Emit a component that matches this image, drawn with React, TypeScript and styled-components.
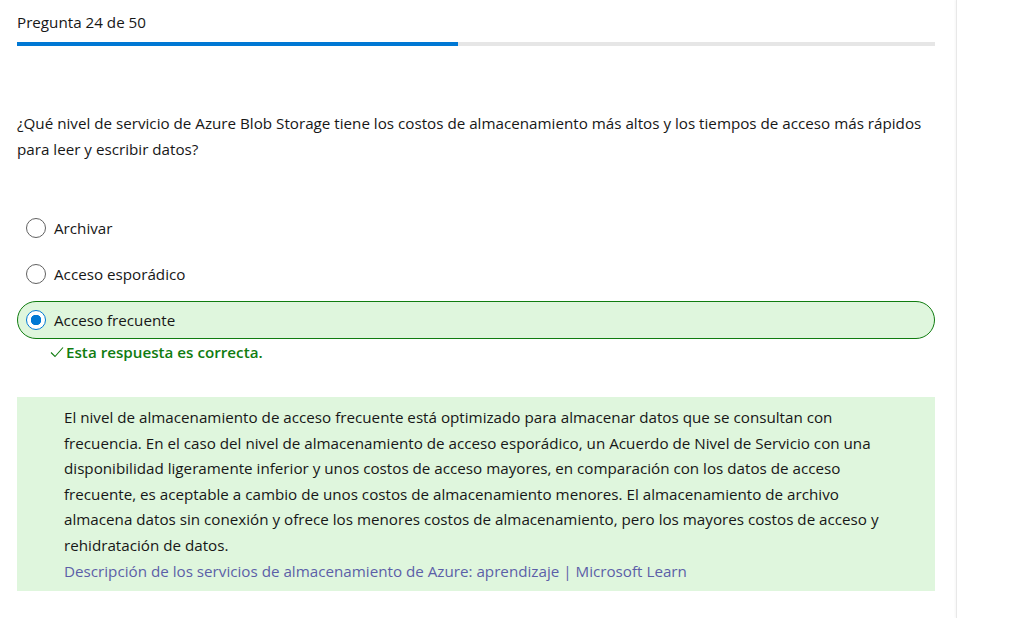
import styled, { createGlobalStyle } from 'styled-components'

const GlobalStyle = createGlobalStyle`
  html, body {
    margin: 0;
    padding: 0;
    background: #ffffff;
  }
  body {
    font-family: "Open Sans", "Noto Sans", Arial, sans-serif;
    color: #171717;
  }
`

const options = [
  { id: 'a', label: 'Archivar', selected: false },
  { id: 'b', label: 'Acceso esporádico', selected: false },
  { id: 'c', label: 'Acceso frecuente', selected: true },
]

const App = () => {
  return (
    <>
      <GlobalStyle />
      <Page>
        <Main>
          <Counter>Pregunta 24 de 50</Counter>
          <Progress>
            <ProgressFill style={{ width: `${(24 / 50) * 100}%` }} />
          </Progress>
          <Question>
            ¿Qué nivel de servicio de Azure Blob Storage tiene los costos de almacenamiento más altos y los tiempos de acceso más rápidos para leer y escribir datos?
          </Question>
          <Options>
            {options.map(o => (
              <Option key={o.id} $selected={o.selected}>
                <Radio $selected={o.selected} />
                <span>{o.label}</span>
              </Option>
            ))}
          </Options>
          <Feedback>
            <svg width="14" height="12" viewBox="0 0 14 12">
              <path d="M1 6.5 L5 10.5 L13 1.5" fill="none" stroke="#107c10" strokeWidth="1.1" />
            </svg>
            Esta respuesta es correcta.
          </Feedback>
          <Explanation>
            <p>
              El nivel de almacenamiento de acceso frecuente está optimizado para almacenar datos que se consultan con frecuencia. En el caso del nivel de almacenamiento de acceso esporádico, un Acuerdo de Nivel de Servicio con una disponibilidad ligeramente inferior y unos costos de acceso mayores, en comparación con los datos de acceso frecuente, es aceptable a cambio de unos costos de almacenamiento menores. El almacenamiento de archivo almacena datos sin conexión y ofrece los menores costos de almacenamiento, pero los mayores costos de acceso y rehidratación de datos.
            </p>
            <RefLink href="#">Descripción de los servicios de almacenamiento de Azure: aprendizaje | Microsoft Learn</RefLink>
          </Explanation>
        </Main>
        <Side />
      </Page>
    </>
  )
}

const Page = styled.div`
  display: flex;
  width: 1036px;
  height: 618px;
  overflow: hidden;
`

const Main = styled.div`
  width: 918px;
  padding: 0 21px 0 17px;
  flex-shrink: 0;
`

const Side = styled.div`
  flex: 1;
  border-left: 1px solid #e8e8e8;
  box-shadow: -1px 0 2px rgba(0, 0, 0, 0.04);
`

const Counter = styled.div`
  font-size: 15.2px;
  line-height: 20px;
  padding-top: 12px;
`

const Progress = styled.div`
  margin-top: 10px;
  height: 4px;
  background: #e6e6e6;
`

const ProgressFill = styled.div`
  height: 100%;
  background: #0078d4;
`

const Question = styled.p`
  margin: 64px 0 0;
  font-size: 15.2px;
  line-height: 26px;
`

const Options = styled.div`
  display: flex;
  flex-direction: column;
  gap: 8px;
  margin-top: 47px;
`

const Option = styled.div<{ $selected: boolean }>`
  display: flex;
  align-items: center;
  gap: 8px;
  height: 38px;
  box-sizing: border-box;
  padding-left: 8px;
  border-radius: 19px;
  font-size: 15.2px;
  border: 1px solid ${p => (p.$selected ? '#107c10' : 'transparent')};
  background: ${p => (p.$selected ? '#dff6dd' : 'transparent')};
`

const Radio = styled.span<{ $selected: boolean }>`
  width: 20px;
  height: 20px;
  box-sizing: border-box;
  border-radius: 50%;
  border: 1px solid ${p => (p.$selected ? '#0078d4' : '#616161')};
  background: ${p => (p.$selected ? 'radial-gradient(circle, #0078d4 0 5px, #ffffff 5.5px)' : '#ffffff')};
`

const Feedback = styled.div`
  display: flex;
  align-items: center;
  gap: 2px;
  margin: 3px 0 0 33px;
  font-size: 15.2px;
  font-weight: 600;
  color: #107c10;
  line-height: 20px;
`

const Explanation = styled.div`
  margin-top: 35px;
  background: #dff6dd;
  padding: 8px 48px 7px 47px;
  font-size: 15.2px;
  line-height: 25.6px;

  p {
    margin: 0;
  }
`

const RefLink = styled.a`
  color: #5c5fa8;
  text-decoration: none;
`

export default App
